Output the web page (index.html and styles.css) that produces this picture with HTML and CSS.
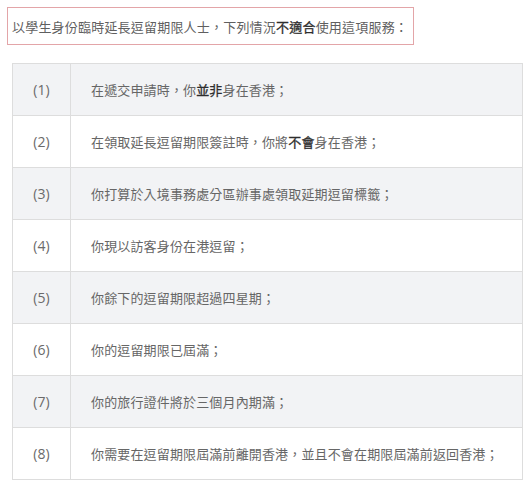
FILE: index.html
```html
<!DOCTYPE html>
<html lang="zh-Hant">
<head>
<meta charset="utf-8">
<link rel="stylesheet" href="styles.css">
</head>
<body>
<div class="notice">以學生身份臨時延長逗留期限人士，下列情況<strong>不適合</strong>使用這項服務：</div>
<table class="conditions">
  <tbody>
    <tr><td class="num">(1)</td><td class="desc">在遞交申請時，你<strong>並非</strong>身在香港；</td></tr>
    <tr><td class="num">(2)</td><td class="desc">在領取延長逗留期限簽註時，你將<strong>不會</strong>身在香港；</td></tr>
    <tr><td class="num">(3)</td><td class="desc">你打算於入境事務處分區辦事處領取延期逗留標籤；</td></tr>
    <tr><td class="num">(4)</td><td class="desc">你現以訪客身份在港逗留；</td></tr>
    <tr><td class="num">(5)</td><td class="desc">你餘下的逗留期限超過四星期；</td></tr>
    <tr><td class="num">(6)</td><td class="desc">你的逗留期限已屆滿；</td></tr>
    <tr><td class="num">(7)</td><td class="desc">你的旅行證件將於三個月內期滿；</td></tr>
    <tr><td class="num">(8)</td><td class="desc">你需要在逗留期限屆滿前離開香港，並且不會在期限屆滿前返回香港；</td></tr>
  </tbody>
</table>
</body>
</html>
```
FILE: styles.css
```css
html, body {
  background: #ffffff;
}
body {
  margin: 7px;
  font-family: "Open Sans", "Noto Sans CJK TC", sans-serif;
  font-size: 13px;
  color: #666666;
}
.notice {
  box-sizing: border-box;
  width: 407px;
  height: 38px;
  border: 1px solid #e3a5a8;
  padding: 0 0 0 4px;
  display: flex;
  align-items: center;
  white-space: nowrap;
  letter-spacing: 0.2px;
  color: #5f5f5f;
}
.notice strong,
.desc strong {
  font-weight: 400;
  color: #2e2e2e;
  -webkit-text-stroke: 0.3px #2e2e2e;
}
.conditions {
  margin: 18px 0 0 5px;
  width: 511px;
  border-collapse: collapse;
  border: 1px solid #dddddd;
}
.conditions td {
  height: 51px;
  padding: 0;
  border-top: 1px solid #dddddd;
  border-bottom: 1px solid #dddddd;
  vertical-align: middle;
}
.conditions tr:nth-child(odd) td {
  background: #f2f3f5;
}
.num {
  width: 57px;
  text-align: center;
  font-size: 14px;
  color: #6a6a6a;
  border-right: 1px solid #dddddd;
}
.desc {
  padding-left: 20px !important;
  white-space: nowrap;
  letter-spacing: 0.15px;
}
```
